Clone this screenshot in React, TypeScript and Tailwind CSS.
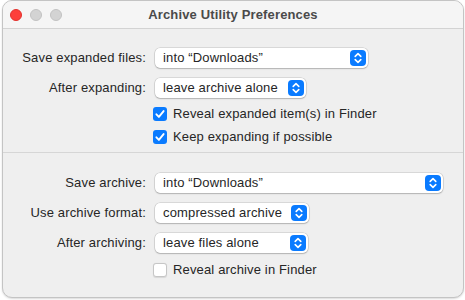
import React from "react";

const Stepper = () => (
  <span className="flex h-4 w-4 items-center justify-center rounded-[4px] bg-[#0a7bff]">
    <svg width="16" height="16" viewBox="0 0 16 16" fill="none">
      <path d="M5.2 6.4 L8 3.7 L10.8 6.4" stroke="white" strokeWidth="1.6" strokeLinecap="round" strokeLinejoin="round" />
      <path d="M5.2 9.6 L8 12.3 L10.8 9.6" stroke="white" strokeWidth="1.6" strokeLinecap="round" strokeLinejoin="round" />
    </svg>
  </span>
);

const Popup = ({ value, width }: { value: string; width: string }) => (
  <div
    className={`flex h-5 items-center justify-between rounded-[5px] bg-white pl-2 pr-[2px] shadow-[0_0_0_0.5px_rgba(0,0,0,0.18),0_1px_1.5px_rgba(0,0,0,0.18)] ${width}`}
  >
    <span>{value}</span>
    <Stepper />
  </div>
);

const Check = ({ checked, label }: { checked: boolean; label: string }) => (
  <div className="flex h-[14px] items-center gap-[6px] pl-[150px]">
    {checked ? (
      <span className="flex h-[14px] w-[14px] items-center justify-center rounded-[3px] bg-[#0a7bff]">
        <svg width="14" height="14" viewBox="0 0 14 14" fill="none">
          <path d="M3.4 7.3 L5.9 9.9 L10.6 4.1" stroke="white" strokeWidth="1.9" strokeLinecap="round" strokeLinejoin="round" />
        </svg>
      </span>
    ) : (
      <span className="h-[14px] w-[14px] rounded-[3px] border border-[#c6c6c6] bg-white shadow-[0_0.5px_1px_rgba(0,0,0,0.1)]" />
    )}
    <span>{label}</span>
  </div>
);

const Row = ({ label, value, width }: { label: string; value: string; width: string }) => (
  <div className="grid grid-cols-[143px_auto] items-center gap-x-[9px]">
    <span className="text-right">{label}</span>
    <Popup value={value} width={width} />
  </div>
);

export default function App() {
  return (
    <div
      className="h-[300px] w-[465px] bg-white text-[13px] tracking-[0.15px] text-[#262626]"
      style={{ fontFamily: '"Liberation Sans", Arial, sans-serif' }}
    >
      <div className="ml-[2px] h-[298px] w-[462px] overflow-hidden rounded-[10px] border border-[#c4c4c4] bg-[#efefef] shadow-[0_1px_2px_rgba(0,0,0,0.15)]">
        <div className="relative flex h-[28px] items-center justify-center border-b border-[#d3d3d3] bg-[#f5f5f5]">
          <div className="absolute left-[7px] top-[8px] flex gap-2">
            <span className="h-3 w-3 rounded-full border border-[#e2312d] bg-[#fd3f3b]" />
            <span className="h-3 w-3 rounded-full border border-[#c2c2c2] bg-[#d3d3d3]" />
            <span className="h-3 w-3 rounded-full border border-[#c2c2c2] bg-[#d3d3d3]" />
          </div>
          <span className="font-bold text-[#4a4a4a]">Archive Utility Preferences</span>
        </div>

        <div className="flex flex-col pt-[19px]">
          <Row label="Save expanded files:" value="into “Downloads”" width="w-[213px]" />
          <div className="mt-[10px]">
            <Row label="After expanding:" value="leave archive alone" width="w-[151px]" />
          </div>
          <div className="mt-[9px]">
            <Check checked label="Reveal expanded item(s) in Finder" />
          </div>
          <div className="mt-[9px]">
            <Check checked label="Keep expanding if possible" />
          </div>
        </div>

        <div className="mt-[8px] border-t border-[#d6d6d6]" />

        <div className="flex flex-col pt-[20px]">
          <Row label="Save archive:" value="into “Downloads”" width="w-[288px]" />
          <div className="mt-[10px]">
            <Row label="Use archive format:" value="compressed archive" width="w-[154px]" />
          </div>
          <div className="mt-[10px]">
            <Row label="After archiving:" value="leave files alone" width="w-[153px]" />
          </div>
          <div className="mt-[10px]">
            <Check checked={false} label="Reveal archive in Finder" />
          </div>
        </div>
      </div>
    </div>
  );
}
